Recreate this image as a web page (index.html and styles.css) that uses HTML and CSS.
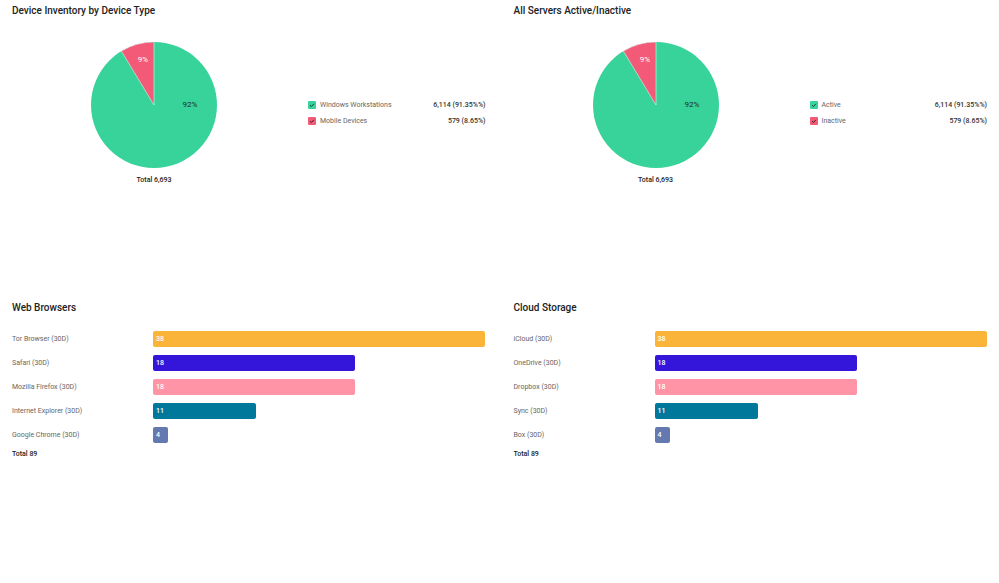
FILE: index.html
```html
<!DOCTYPE html>
<html>
<head>
<meta charset="utf-8">
<link rel="stylesheet" href="styles.css">
</head>
<body>
<div class="grid">
  <section class="panel pie-panel">
    <h2 class="title">Device Inventory by Device Type</h2>
    <div class="chart-row">
      <div class="pie-box">
        <svg class="pie" width="126" height="126" viewBox="-63 -63 126 126">
          <circle cx="0" cy="0" r="63" fill="#37d39a"/>
          <path d="M0,0 L0,-63 A63,63 0 0 0 -32.58,-53.92 Z" fill="#f25a78" stroke="#fff" stroke-width="0.5"/>
          <text x="-11" y="-43" class="pie-lbl light" text-anchor="middle">9%</text>
          <text x="36" y="2" class="pie-lbl" text-anchor="middle">92%</text>
        </svg>
        <div class="total center">Total 6,693</div>
      </div>
      <div class="legend">
        <div class="legend-row">
          <svg class="chk" width="8" height="8" viewBox="0 0 8 8"><rect width="8" height="8" rx="1" fill="#37d39a"/><path d="M2 4.2 L3.4 5.5 L6 2.8" fill="none" stroke="#1d2b2a" stroke-width="0.9"/></svg>
          <span class="lg-name">Windows Workstations</span>
          <span class="lg-val">6,114 (91.35%%)</span>
        </div>
        <div class="legend-row">
          <svg class="chk" width="8" height="8" viewBox="0 0 8 8"><rect width="8" height="8" rx="1" fill="#f25a78"/><path d="M2 4.2 L3.4 5.5 L6 2.8" fill="none" stroke="#2a1a1e" stroke-width="0.9"/></svg>
          <span class="lg-name">Mobile Devices</span>
          <span class="lg-val">579 (8.65%)</span>
        </div>
      </div>
    </div>
  </section>

  <section class="panel pie-panel">
    <h2 class="title">All Servers Active/Inactive</h2>
    <div class="chart-row">
      <div class="pie-box">
        <svg class="pie" width="126" height="126" viewBox="-63 -63 126 126">
          <circle cx="0" cy="0" r="63" fill="#37d39a"/>
          <path d="M0,0 L0,-63 A63,63 0 0 0 -32.58,-53.92 Z" fill="#f25a78" stroke="#fff" stroke-width="0.5"/>
          <text x="-11" y="-43" class="pie-lbl light" text-anchor="middle">9%</text>
          <text x="36" y="2" class="pie-lbl" text-anchor="middle">92%</text>
        </svg>
        <div class="total center">Total 6,693</div>
      </div>
      <div class="legend">
        <div class="legend-row">
          <svg class="chk" width="8" height="8" viewBox="0 0 8 8"><rect width="8" height="8" rx="1" fill="#37d39a"/><path d="M2 4.2 L3.4 5.5 L6 2.8" fill="none" stroke="#1d2b2a" stroke-width="0.9"/></svg>
          <span class="lg-name">Active</span>
          <span class="lg-val">6,114 (91.35%%)</span>
        </div>
        <div class="legend-row">
          <svg class="chk" width="8" height="8" viewBox="0 0 8 8"><rect width="8" height="8" rx="1" fill="#f25a78"/><path d="M2 4.2 L3.4 5.5 L6 2.8" fill="none" stroke="#2a1a1e" stroke-width="0.9"/></svg>
          <span class="lg-name">Inactive</span>
          <span class="lg-val">579 (8.65%)</span>
        </div>
      </div>
    </div>
  </section>

  <section class="panel bar-panel">
    <h2 class="title">Web Browsers</h2>
    <div class="bars">
      <div class="bar-row"><span class="bar-lbl">Tor Browser (30D)</span><div class="track"><div class="bar c1" style="width:332px">38</div></div></div>
      <div class="bar-row"><span class="bar-lbl">Safari (30D)</span><div class="track"><div class="bar c2" style="width:202px">18</div></div></div>
      <div class="bar-row"><span class="bar-lbl">Mozilla Firefox (30D)</span><div class="track"><div class="bar c3" style="width:202px">18</div></div></div>
      <div class="bar-row"><span class="bar-lbl">Internet Explorer (30D)</span><div class="track"><div class="bar c4" style="width:103px">11</div></div></div>
      <div class="bar-row"><span class="bar-lbl">Google Chrome (30D)</span><div class="track"><div class="bar c5" style="width:15px">4</div></div></div>
    </div>
    <div class="total">Total 89</div>
  </section>

  <section class="panel bar-panel">
    <h2 class="title">Cloud Storage</h2>
    <div class="bars">
      <div class="bar-row"><span class="bar-lbl">iCloud (30D)</span><div class="track"><div class="bar c1" style="width:332px">38</div></div></div>
      <div class="bar-row"><span class="bar-lbl">OneDrive (30D)</span><div class="track"><div class="bar c2" style="width:202px">18</div></div></div>
      <div class="bar-row"><span class="bar-lbl">Dropbox (30D)</span><div class="track"><div class="bar c3" style="width:202px">18</div></div></div>
      <div class="bar-row"><span class="bar-lbl">Sync (30D)</span><div class="track"><div class="bar c4" style="width:103px">11</div></div></div>
      <div class="bar-row"><span class="bar-lbl">Box (30D)</span><div class="track"><div class="bar c5" style="width:15px">4</div></div></div>
    </div>
    <div class="total">Total 89</div>
  </section>
</div>
</body>
</html>
```

FILE: styles.css
```css
* { box-sizing: border-box; }
html, body { margin: 0; padding: 0; background: #fff; }
body {
  font-family: Roboto, "Liberation Sans", sans-serif;
  color: #222;
  width: 999px;
  height: 583px;
  overflow: hidden;
}
.grid {
  display: grid;
  grid-template-columns: 1fr 1fr;
  grid-template-rows: 297px auto;
  column-gap: 28px;
  padding: 0 12px;
}
.panel { min-width: 0; }
.title {
  margin: 5px 0 0 0;
  font-size: 10px;
  line-height: 12px;
  font-weight: 500;
  color: #222;
}
.chart-row {
  display: flex;
  margin-top: 25px;
}
.pie-box {
  width: 284px;
  display: flex;
  flex-direction: column;
  align-items: center;
}
.pie { display: block; }
.pie-lbl {
  font-family: Roboto, "Liberation Sans", sans-serif;
  font-size: 8px;
  font-weight: 400;
  fill: #1e2a28;
}
.pie-lbl.light { fill: #fff; }
.total {
  font-size: 7px;
  line-height: 10px;
  font-weight: 500;
  color: #222;
}
.total.center { margin-top: 7px; }
.legend {
  flex: 1;
  padding-left: 12px;
  margin-top: 55px;
}
.legend-row {
  display: flex;
  align-items: center;
  height: 16px;
}
.chk { display: block; flex: none; }
.lg-name {
  margin-left: 4px;
  font-size: 7px;
  color: #666;
  flex: 1;
}
.lg-val {
  font-size: 7px;
  font-weight: 500;
  color: #333;
}
.bars { margin-top: 12.5px; }
.bar-row {
  display: flex;
  align-items: center;
  height: 24px;
}
.bar-lbl {
  width: 141px;
  flex: none;
  font-size: 7px;
  color: #666;
}
.track { flex: 1; }
.bar {
  height: 16px;
  border-radius: 2px;
  padding-left: 3px;
  font-size: 7px;
  line-height: 16px;
  font-weight: 500;
  color: #fff;
}
.bar-panel .total { margin-top: 2px; }
.c1 { background: #fbb43a; }
.c2 { background: #3415da; }
.c3 { background: #ff94a6; }
.c4 { background: #00789c; }
.c5 { background: #6479b0; }
```
